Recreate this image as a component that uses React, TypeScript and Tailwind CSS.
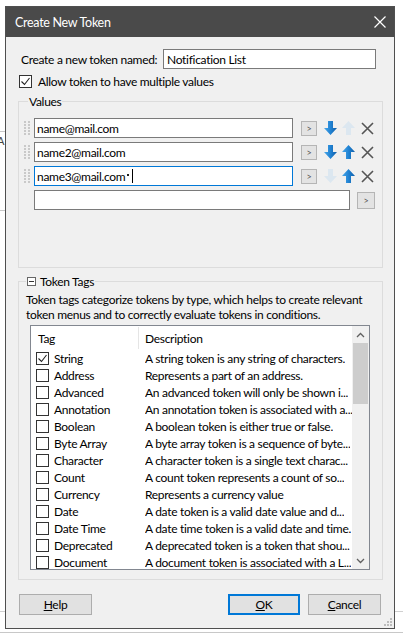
import React from "react";

type TagRow = { tag: string; desc: string; checked?: boolean };

const tags: TagRow[] = [
  { tag: "String", desc: "A string token is any string of characters.", checked: true },
  { tag: "Address", desc: "Represents a part of an address." },
  { tag: "Advanced", desc: "An advanced token will only be shown i..." },
  { tag: "Annotation", desc: "An annotation token is associated with a..." },
  { tag: "Boolean", desc: "A boolean token is either true or false." },
  { tag: "Byte Array", desc: "A byte array token is a sequence of byte..." },
  { tag: "Character", desc: "A character token is a single text charac..." },
  { tag: "Count", desc: "A count token represents a count of so..." },
  { tag: "Currency", desc: "Represents a currency value" },
  { tag: "Date", desc: "A date token is a valid date value and d..." },
  { tag: "Date Time", desc: "A date time token is a valid date and time." },
  { tag: "Deprecated", desc: "A deprecated token is a token that shou..." },
  { tag: "Document", desc: "A document token is associated with a L..." },
];

const values = [
  { text: "name@mail.com", down: true, up: false, focus: false },
  { text: "name2@mail.com", down: true, up: true, focus: false },
  { text: "name3@mail.com", down: false, up: true, focus: true },
];

function Check({ checked }: { checked?: boolean }) {
  return (
    <span className="w-[13px] h-[13px] border border-[#333] bg-white flex items-center justify-center shrink-0">
      {checked && (
        <svg width="11" height="11" viewBox="0 0 11 11">
          <path d="M1.5 5.5l3 3 5-6.5" fill="none" stroke="#222" strokeWidth="1.1" />
        </svg>
      )}
    </span>
  );
}

function Arrow({ dir, on }: { dir: "up" | "down"; on: boolean }) {
  const d =
    dir === "down"
      ? "M4 0h5v7h4l-6.5 7L0 7h4z"
      : "M4 14h5V7h4L6.5 0 0 7h4z";
  return (
    <svg width="13" height="14" viewBox="0 0 13 14" className="shrink-0">
      <path d={d} fill={on ? "url(#blueArrow)" : "#dce7f0"} />
    </svg>
  );
}

function Cross() {
  return (
    <svg width="13" height="13" viewBox="0 0 13 13" className="shrink-0">
      <path d="M1 1l11 11M12 1L1 12" stroke="#555" strokeWidth="1.6" />
    </svg>
  );
}

function Grip() {
  return (
    <div className="grid grid-cols-2 gap-[1px] w-[6px] shrink-0">
      {Array.from({ length: 10 }).map((_, i) => (
        <span key={i} className="w-[2px] h-[2px] bg-[#c9c9c9]" />
      ))}
    </div>
  );
}

function SmallBtn({ big }: { big?: boolean }) {
  return (
    <span
      className={
        big
          ? "w-[18px] h-[17px] border border-[#b5b5b5] bg-[#e3e3e3] flex items-center justify-center text-[9px] text-[#555] shrink-0"
          : "w-[16px] h-[15px] border border-[#b5b5b5] bg-[#e3e3e3] flex items-center justify-center text-[9px] text-[#555] shrink-0"
      }
    >
      &gt;
    </span>
  );
}

export default function App() {
  return (
    <div className="w-[403px] h-[637px] bg-white relative overflow-hidden font-['Lato',sans-serif] text-[12px] leading-[15px] tracking-[-0.3px] text-black">
      <svg width="0" height="0" className="absolute">
        <defs>
          <linearGradient id="blueArrow" x1="0" x2="1" y1="0" y2="0">
            <stop offset="0" stopColor="#4aa8ea" />
            <stop offset="0.5" stopColor="#2183d3" />
            <stop offset="1" stopColor="#0f5ea8" />
          </linearGradient>
        </defs>
      </svg>

      {/* bits of the app behind the dialog */}
      <div className="absolute left-0 top-[131px] w-[5px] border-t border-dashed border-[#c8c8c8]" />
      <div className="absolute left-0 top-[210px] w-[5px] border-t border-dashed border-[#c8c8c8]" />
      <div className="absolute left-[-3px] top-[133px] text-[11px] text-[#444]">A</div>
      <div className="absolute left-0 top-[611px] w-[5px] border-t border-[#d0d0d0]" />
      <div className="absolute left-[395px] top-[611px] w-[8px] border-t border-[#d0d0d0]" />
      <div className="absolute left-0 top-[632px] w-[403px] border-t border-[#c8c8c8]" />

      <div className="pt-[6px] pl-[5px]">
        <div className="w-[390px] h-[623px] border border-[#4f4f4f] bg-[#f0f0f0] flex flex-col relative">
          {/* title bar */}
          <div className="h-[30px] shrink-0 bg-[#4a4a4a] flex items-center justify-between pl-[9px] pr-[8px] text-white">
            <span className="text-[12.5px]">Create New Token</span>
            <svg width="12" height="12" viewBox="0 0 12 12">
              <path d="M0.5 0.5l11 11M11.5 0.5l-11 11" stroke="#fff" strokeWidth="1.2" />
            </svg>
          </div>

          {/* name */}
          <div className="mt-[12px] h-[20px] flex items-center whitespace-nowrap">
            <span className="pl-[15px] w-[157px] shrink-0">Create a new token named:</span>
            <div className="w-[213px] h-[20px] border border-[#7a7a7a] bg-white flex items-center pl-[3px]">
              Notification List
            </div>
          </div>

          <div className="mt-[6px] h-[13px] pl-[13px] flex items-center gap-[6px] whitespace-nowrap">
            <Check checked />
            <span>Allow token to have multiple values</span>
          </div>

          {/* Values */}
          <fieldset className="mt-[6px] ml-[12px] w-[365px] border border-[#dcdcdc] pb-[57px]">
            <legend className="ml-[9px] px-[1px] leading-[15px]">Values</legend>
            <div className="mt-[9px] flex flex-col gap-[4px]">
              {values.map((v) => (
                <div key={v.text} className="flex items-center h-[20px]">
                  <span className="ml-[5px]">
                    <Grip />
                  </span>
                  <div
                    className={
                      v.focus
                        ? "ml-[4px] w-[259px] h-[20px] border border-[#0078d7] bg-white flex items-center pl-[2px]"
                        : "ml-[4px] w-[259px] h-[20px] border border-[#7a7a7a] bg-white flex items-center pl-[2px]"
                    }
                  >
                    {v.text}
                    {v.focus && (
                      <>
                        <span className="ml-[2px] w-[2px] h-[2px] bg-[#222] mb-[2px]" />
                        <span className="ml-[3px] w-[1px] h-[14px] bg-black" />
                      </>
                    )}
                  </div>
                  <span className="ml-[8px]">
                    <SmallBtn />
                  </span>
                  <span className="ml-[7px] flex">
                    <Arrow dir="down" on={v.down} />
                  </span>
                  <span className="ml-[5px] flex">
                    <Arrow dir="up" on={v.up} />
                  </span>
                  <span className="ml-[6px] flex">
                    <Cross />
                  </span>
                </div>
              ))}
              <div className="flex items-center h-[20px]">
                <span className="ml-[15px] w-[316px] h-[20px] border border-[#7a7a7a] bg-white" />
                <span className="ml-[7px]">
                  <SmallBtn big />
                </span>
              </div>
            </div>
          </fieldset>

          {/* Token Tags */}
          <fieldset className="mt-[6px] ml-[12px] w-[365px] border border-[#dcdcdc] pb-[9px]">
            <legend className="ml-[7px] px-[1px] leading-[15px] flex items-center gap-[4px]">
              <svg width="9" height="9" viewBox="0 0 9 9">
                <rect x="0.5" y="0.5" width="8" height="8" fill="#fff" stroke="#666" />
                <path d="M2 4.5h5" stroke="#333" />
              </svg>
              <span>Token Tags</span>
            </legend>
            <p className="mt-[3px] pl-[7px] leading-[15px] whitespace-nowrap">
              Token tags categorize tokens by type, which helps to create relevant
              <br />
              token menus and to correctly evaluate tokens in conditions.
            </p>
            <div className="mt-[3px] ml-[11px] w-[340px] h-[245px] border border-[#828790] bg-white flex">
              <div className="flex-1 min-w-0 overflow-hidden">
                <div className="h-[24px] flex items-center whitespace-nowrap">
                  <span className="pl-[7px] w-[107px] shrink-0">Tag</span>
                  <span className="w-[1px] h-[22px] bg-[#e5e5e5] shrink-0" />
                  <span className="ml-[6px]">Description</span>
                </div>
                {tags.map((t) => (
                  <div key={t.tag} className="h-[17px] flex items-center whitespace-nowrap">
                    <div className="w-[114px] shrink-0 flex items-center pl-[5px] gap-[5px]">
                      <Check checked={t.checked} />
                      <span>{t.tag}</span>
                    </div>
                    <span className="min-w-0 overflow-hidden">{t.desc}</span>
                  </div>
                ))}
              </div>
              <div className="w-[17px] shrink-0 bg-[#f0f0f0] flex flex-col">
                <div className="h-[17px] flex items-center justify-center">
                  <svg width="9" height="6" viewBox="0 0 9 6">
                    <path d="M1 5l3.5-3.5L8 5" fill="none" stroke="#606060" strokeWidth="1.3" />
                  </svg>
                </div>
                <div className="mx-[1px] h-[61px] bg-[#cdcdcd]" />
                <div className="flex-1" />
                <div className="h-[17px] flex items-center justify-center">
                  <svg width="9" height="6" viewBox="0 0 9 6">
                    <path d="M1 1l3.5 3.5L8 1" fill="none" stroke="#606060" strokeWidth="1.3" />
                  </svg>
                </div>
              </div>
            </div>
          </fieldset>

          {/* buttons */}
          <div className="mt-[14px] flex items-center">
            <button className="ml-[13px] w-[73px] h-[21px] border border-[#adadad] bg-[#e1e1e1]">
              <span className="underline">H</span>elp
            </button>
            <button className="ml-auto w-[72px] h-[21px] border-2 border-[#0078d7] bg-[#e1e1e1]">
              <span className="underline">O</span>K
            </button>
            <button className="ml-[8px] mr-[13px] w-[73px] h-[21px] border border-[#adadad] bg-[#e1e1e1]">
              <span className="underline">C</span>ancel
            </button>
          </div>

          {/* size grip */}
          <svg width="9" height="9" viewBox="0 0 9 9" className="absolute right-[2px] bottom-[2px]">
            {[
              [7, 1],
              [4, 4],
              [7, 4],
              [1, 7],
              [4, 7],
              [7, 7],
            ].map(([x, y]) => (
              <rect key={`${x}-${y}`} x={x} y={y} width="2" height="2" fill="#bcbcbc" />
            ))}
          </svg>
        </div>
      </div>
    </div>
  );
}
